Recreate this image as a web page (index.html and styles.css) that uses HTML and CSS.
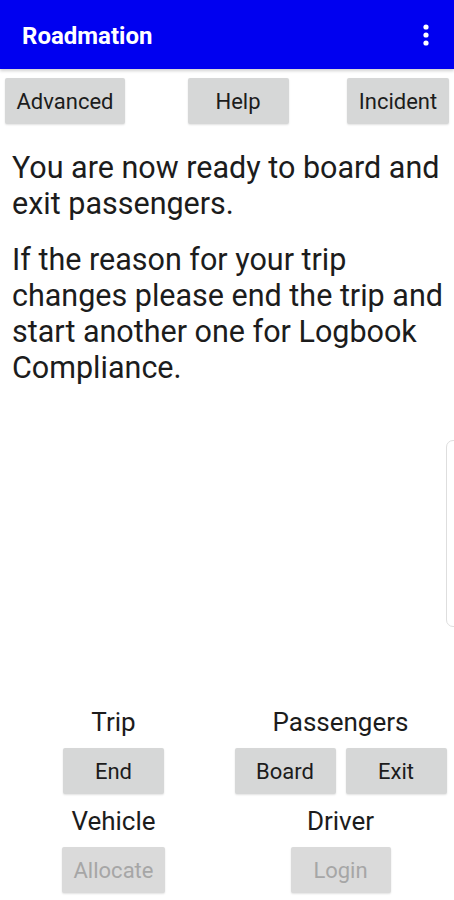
FILE: index.html
```html
<!DOCTYPE html>
<html lang="en">
<head>
    <meta charset="UTF-8">
    <title>Roadmation</title>
    <link rel="stylesheet" href="styles.css">
</head>
<body>
<div class="app">
    <div class="toolbar">
        <span class="title">Roadmation</span>
        <svg class="menu" width="6" height="22" viewBox="0 0 6 22">
            <circle cx="3" cy="3" r="2.6" fill="#fff"/>
            <circle cx="3" cy="11" r="2.6" fill="#fff"/>
            <circle cx="3" cy="19" r="2.6" fill="#fff"/>
        </svg>
    </div>

    <div class="top-buttons">
        <button class="btn btn-advanced">Advanced</button>
        <button class="btn btn-help">Help</button>
        <button class="btn btn-incident">Incident</button>
    </div>

    <div class="content">
        <p>You are now ready to board and exit passengers.</p>
        <p>If the reason for your trip changes please end the trip and start another one for Logbook Compliance.</p>
    </div>

    <div class="controls">
        <div class="group">
            <div class="label">Trip</div>
            <div class="row"><button class="btn">End</button></div>
        </div>
        <div class="group">
            <div class="label">Passengers</div>
            <div class="row">
                <button class="btn">Board</button>
                <button class="btn">Exit</button>
            </div>
        </div>
        <div class="group">
            <div class="label">Vehicle</div>
            <div class="row"><button class="btn btn-wide" disabled>Allocate</button></div>
        </div>
        <div class="group">
            <div class="label">Driver</div>
            <div class="row"><button class="btn btn-narrow" disabled>Login</button></div>
        </div>
    </div>

    <div class="edge-handle"></div>
</div>
</body>
</html>
```

FILE: styles.css
```css
body {
    margin: 0;
    font-family: Roboto, "Noto Sans", sans-serif;
    background-color: #ffffff;
    color: #1c1c1c;
}
.app {
    position: relative;
    display: flex;
    flex-direction: column;
    height: 900px;
    overflow: hidden;
}
.toolbar {
    display: flex;
    align-items: center;
    justify-content: space-between;
    height: 69px;
    padding: 0 25px 0 22px;
    background-color: #0000f0;
    box-shadow: 0 2px 3px rgba(0, 0, 0, 0.18);
}
.title {
    color: #ffffff;
    font-size: 24px;
    font-weight: bold;
    margin-top: 2px;
}
.menu {
    display: block;
}
.top-buttons {
    display: flex;
    justify-content: space-between;
    padding: 9px 5px 0 5px;
}
.btn {
    width: 101px;
    height: 46px;
    padding: 0;
    border: none;
    border-radius: 2px;
    background-color: #d6d7d7;
    color: #1c1c1c;
    font-family: Roboto, "Noto Sans", sans-serif;
    font-size: 22px;
    box-shadow: 0 1px 2px rgba(0, 0, 0, 0.12);
}
.btn-advanced {
    width: 120px;
}
.btn-help {
    margin-left: 4px;
}
.btn-incident {
    width: 102px;
}
.btn-wide {
    width: 103px;
}
.btn-narrow {
    width: 100px;
}
.btn:disabled {
    color: #a6a6a6;
    background-color: #dadada;
}
.content {
    flex: 1;
    padding: 26px 0 0 12px;
}
.content p {
    margin: 0 0 20px 0;
    font-size: 30.5px;
    line-height: 36px;
}
.controls {
    display: grid;
    grid-template-columns: 1fr 1fr;
    row-gap: 12px;
    padding-bottom: 7px;
}
.group {
    display: flex;
    flex-direction: column;
    align-items: center;
}
.label {
    font-size: 26px;
    line-height: 30px;
    margin-bottom: 11px;
}
.row {
    display: flex;
    gap: 10px;
}
.edge-handle {
    position: absolute;
    right: -8px;
    top: 440px;
    width: 14px;
    height: 185px;
    border: 1px solid #dedede;
    border-radius: 7px;
}
```
